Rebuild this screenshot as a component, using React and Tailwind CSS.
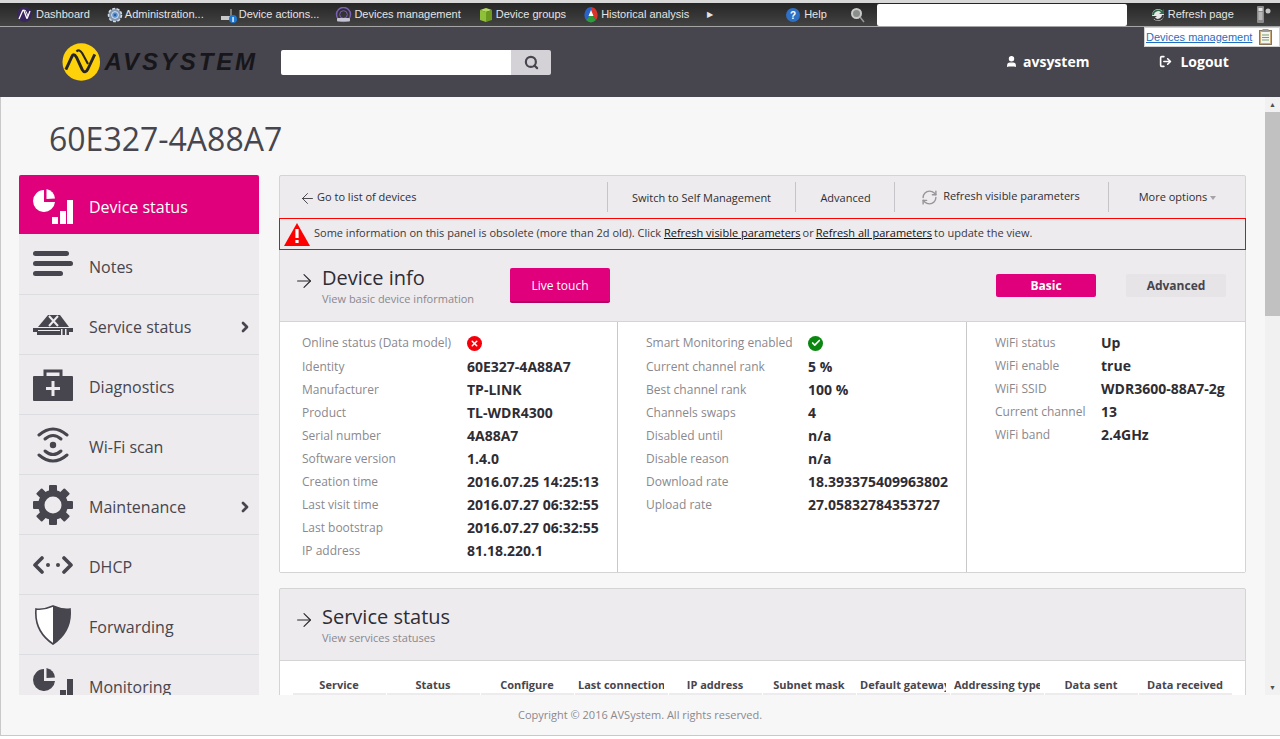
import React from 'react';
import { ArrowLeft, ArrowRight, ChevronRight, RefreshCw, Search, User, LogOut, X, Check } from 'lucide-react';

/* ── Small toolbar icons ─────────────────────────────────────────── */

const AvMark = () => (
  <svg width="15" height="15" viewBox="0 0 15 15">
    <circle cx="7.5" cy="7.5" r="7.5" fill="#3a2560" />
    <path d="M2 12 L5.5 4 Q6.5 2 7.5 5 L9.5 10.5 Q10 12 10.5 10.5 L13 4" fill="none" stroke="#fff" strokeWidth="1.3" />
    <path d="M7 3.5 Q8 2 9 4.5 L11 9" fill="none" stroke="#fff" strokeWidth="0.9" />
  </svg>
);

const AdminIcon = () => (
  <svg width="16" height="16" viewBox="0 0 16 16">
    <circle cx="8" cy="8" r="6.5" fill="#8296ad" stroke="#d5dde6" strokeDasharray="3 1.5" strokeWidth="1.5" />
    <circle cx="8" cy="8" r="3.4" fill="#5a90cf" stroke="#d8e2ee" />
    <circle cx="8" cy="8" r="1.2" fill="#2d5f9c" />
  </svg>
);

const DeviceActionsIcon = () => (
  <svg width="16" height="16" viewBox="0 0 16 16">
    <rect x="0" y="9" width="12" height="4" fill="#c8c8c8" />
    <path d="M10 9 V2" stroke="#c8c8c8" />
    <circle cx="12" cy="12" r="4" fill="#1f78d1" />
    <rect x="11.4" y="10" width="1.3" height="5" fill="#fff" />
  </svg>
);

const DevicesMgmtIcon = () => (
  <svg width="17" height="16" viewBox="0 0 17 16" fill="none">
    <circle cx="8.5" cy="7.5" r="7" stroke="#7a5fb5" strokeWidth="1.5" />
    <circle cx="8.5" cy="7.5" r="3.8" stroke="#7a5fb5" />
    <rect x="2" y="11" width="13" height="3.5" rx="1" fill="#c5c5d5" />
  </svg>
);

const CubeIcon = () => (
  <svg width="14" height="16" viewBox="0 0 14 16">
    <path d="M1 3 L7 1 L13 3 L7 5 Z" fill="#b5dc60" />
    <path d="M1 3 L7 5 V15 L1 13 Z" fill="#8fc03a" />
    <path d="M13 3 L7 5 V15 L13 13 Z" fill="#6c9a20" />
  </svg>
);

const HistoryIcon = () => (
  <svg width="14" height="16" viewBox="0 0 14 16">
    <path d="M7 0 A7 8 0 0 0 2 13 L7 7 Z" fill="#2a62c8" />
    <path d="M7 0 A7 8 0 0 1 12 13 L7 7 Z" fill="#d9342b" />
    <path d="M2 13 A7 8 0 0 0 12 13 L7 7 Z" fill="#2e9a3e" />
    <path d="M7 3 L9.5 9 H4.5 Z" fill="#fff" />
  </svg>
);

const HelpIcon = () => (
  <svg width="14" height="14" viewBox="0 0 14 14">
    <circle cx="7" cy="7" r="7" fill="#2f6fc4" />
    <text x="7" y="11" textAnchor="middle" fontSize="10" fontWeight="700" fill="#fff" fontFamily="Liberation Sans, sans-serif">?</text>
  </svg>
);

const MagnifierIcon = () => (
  <svg width="16" height="16" viewBox="0 0 16 16">
    <circle cx="6.5" cy="6.5" r="4.5" fill="#8b8f8b" stroke="#c9cbc9" strokeWidth="2" />
    <path d="M10 10 L14 15" stroke="#9a9a9a" strokeWidth="1.5" />
  </svg>
);

const RefreshPageIcon = () => (
  <svg width="14" height="14" viewBox="0 0 14 14">
    <circle cx="7" cy="7" r="6" fill="#e8e8e8" />
    <path d="M1 7 A6 6 0 0 1 11 3 L13 1 V6 H8 L10 4.5 A4 4 0 0 0 3 7 Z" fill="#2c6e49" />
    <path d="M13 7 A6 6 0 0 1 3 11 L1 13 V8 H6 L4 9.5 A4 4 0 0 0 11 7 Z" fill="#3c3c3c" />
  </svg>
);

const RemoteIcon = () => (
  <svg width="16" height="18" viewBox="0 0 16 18">
    <rect x="1" y="0" width="7" height="17" rx="1" fill="#8c8c8c" />
    <rect x="2.5" y="2" width="4" height="3" fill="#e2e2e2" />
    <path d="M2.5 7h4M2.5 9h4M2.5 11h4M2.5 13h4" stroke="#e2e2e2" />
    <circle cx="12" cy="5" r="2.5" fill="#c4c4c4" />
  </svg>
);

const ClipboardIcon = () => (
  <svg width="13" height="16" viewBox="0 0 13 16">
    <rect x="0.5" y="1.5" width="12" height="14" fill="#c9a977" stroke="#8a7656" />
    <rect x="2" y="3" width="9" height="11" fill="#f4f4f0" />
    <rect x="3.5" y="0" width="6" height="3" fill="#9a9a9a" />
    <path d="M3 6h7M3 8.5h7M3 11h7" stroke="#7a9a70" />
  </svg>
);

/* ── Logo ────────────────────────────────────────────────────────── */

const LogoMark = () => (
  <svg width="40" height="40" viewBox="0 0 40 40">
    <circle cx="20" cy="20" r="19.5" fill="#fdd20a" />
    <path d="M4 28 L10 15 Q12 10 15 15 L21 28 Q24 33 27 27 L34 12" fill="none" stroke="#26252a" strokeWidth="3" />
    <path d="M15 9 Q18 6 21 11 L27 22" fill="none" stroke="#26252a" strokeWidth="2.2" />
  </svg>
);

/* ── Sidebar icons ───────────────────────────────────────────────── */

const StatusIcon = ({ color }) => (
  <svg width="40" height="36" viewBox="0 0 40 36" fill={color}>
    <path d="M11 2 A11 11 0 1 0 22 14 H11 Z" />
    <path d="M13.5 1 A10.5 10.5 0 0 1 22 10.5 L13.5 11 Z" />
    <rect x="19" y="29" width="6" height="7" />
    <rect x="27" y="23" width="6" height="13" />
    <rect x="34" y="12" width="6" height="24" />
  </svg>
);

const NotesIcon = () => (
  <svg width="40" height="26" viewBox="0 0 40 26" fill="#47454d">
    <rect x="0" y="0" width="36" height="5" rx="2.5" />
    <rect x="0" y="10" width="40" height="5" rx="2.5" />
    <rect x="0" y="20" width="30" height="5" rx="2.5" />
  </svg>
);

const ServiceIcon = () => (
  <svg width="40" height="22" viewBox="0 0 40 22">
    <path d="M5 13 L15 1 H27 L36 13 Z" fill="#47454d" />
    <path d="M16 2 L25 12 M25 2 L16 12" stroke="#edebee" strokeWidth="2" />
    <path d="M0 14 H40 V18 H36 V21 H4 V18 H0 Z" fill="#47454d" />
    <path d="M5 16.5 H27" stroke="#edebee" />
    <rect x="28" y="15" width="1.5" height="6" fill="#edebee" />
    <rect x="32" y="15" width="1.5" height="6" fill="#edebee" />
  </svg>
);

const KitIcon = () => (
  <svg width="40" height="32" viewBox="0 0 40 32">
    <path d="M12 8 V2 H28 V8" fill="none" stroke="#47454d" strokeWidth="3" />
    <rect x="0" y="7" width="40" height="25" rx="1" fill="#47454d" />
    <path d="M20 12 V27 M13 19.5 H27" stroke="#edebee" strokeWidth="3" />
  </svg>
);

const WifiIcon = () => (
  <svg width="32" height="38" viewBox="0 0 32 38" fill="none" stroke="#47454d" strokeWidth="3" strokeLinecap="round">
    <path d="M2 9 Q16 -3 30 9" />
    <path d="M8 13 Q16 6 24 13" />
    <circle cx="16" cy="19" r="3.2" fill="#47454d" stroke="none" />
    <path d="M8 25 Q16 32 24 25" />
    <path d="M2 29 Q16 41 30 29" />
  </svg>
);

const GearIcon = () => (
  <svg width="40" height="40" viewBox="0 0 40 40">
    <g fill="#47454d">
      <rect x="16" y="0" width="8" height="40" rx="1" />
      <rect x="16" y="0" width="8" height="40" rx="1" transform="rotate(45 20 20)" />
      <rect x="16" y="0" width="8" height="40" rx="1" transform="rotate(90 20 20)" />
      <rect x="16" y="0" width="8" height="40" rx="1" transform="rotate(135 20 20)" />
      <circle cx="20" cy="20" r="15" />
    </g>
    <circle cx="20" cy="20" r="8.5" fill="#edebee" />
  </svg>
);

const DhcpIcon = () => (
  <svg width="40" height="18" viewBox="0 0 40 18" fill="none" stroke="#47454d" strokeWidth="3.6" strokeLinecap="round" strokeLinejoin="round">
    <path d="M9 2 L2 9 L9 16" />
    <path d="M31 2 L38 9 L31 16" />
    <circle cx="15" cy="9" r="2" fill="#47454d" stroke="none" />
    <circle cx="25" cy="9" r="2" fill="#47454d" stroke="none" />
  </svg>
);

const ShieldIcon = () => (
  <svg width="38" height="40" viewBox="0 0 38 40">
    <path d="M19 1 Q10 5 2 4 Q0 26 19 39 Q38 26 36 4 Q28 5 19 1 Z" fill="#fff" stroke="#47454d" strokeWidth="1.6" />
    <path d="M19 1 Q28 5 36 4 Q38 26 19 39 Z" fill="#47454d" />
  </svg>
);

/* ── Data ────────────────────────────────────────────────────────── */

const toolbarItems = [
  { label: 'Dashboard', icon: <AvMark />, cls: 'gap-[4px]' },
  { label: 'Administration...', icon: <AdminIcon />, cls: 'gap-[2px] ml-[1px]' },
  { label: 'Device actions...', icon: <DeviceActionsIcon />, cls: 'gap-[2px] ml-[1px]' },
  { label: 'Devices management', icon: <DevicesMgmtIcon />, cls: 'gap-[2px]' },
  { label: 'Device groups', icon: <CubeIcon />, cls: 'gap-[3px] ml-[2px]' },
  { label: 'Historical analysis', icon: <HistoryIcon />, cls: 'gap-[3px] ml-[2px]' },
];

const sideItems = [
  { label: 'Notes', icon: <NotesIcon />, height: 'h-[61px]', labelTop: 'mt-[6px]' },
  { label: 'Service status', icon: <ServiceIcon />, more: true, height: 'h-[60px]', labelTop: 'mt-[4px]' },
  { label: 'Diagnostics', icon: <KitIcon />, height: 'h-[60px]', labelTop: 'mt-[4px]' },
  { label: 'Wi-Fi scan', icon: <WifiIcon />, height: 'h-[60px]', labelTop: 'mt-[4px]' },
  { label: 'Maintenance', icon: <GearIcon />, more: true, height: 'h-[60px]', labelTop: 'mt-[4px]' },
  { label: 'DHCP', icon: <DhcpIcon />, height: 'h-[60px]', labelTop: 'mt-[4px]' },
  { label: 'Forwarding', icon: <ShieldIcon />, height: 'h-[60px]', labelTop: 'mt-[4px]' },
  { label: 'Monitoring', icon: <StatusIcon color="#47454d" />, height: 'h-[60px]', labelTop: 'mt-[4px]' },
];

const infoLeft = [
  ['Identity', '60E327-4A88A7'],
  ['Manufacturer', 'TP-LINK'],
  ['Product', 'TL-WDR4300'],
  ['Serial number', '4A88A7'],
  ['Software version', '1.4.0'],
  ['Creation time', '2016.07.25 14:25:13'],
  ['Last visit time', '2016.07.27 06:32:55'],
  ['Last bootstrap', '2016.07.27 06:32:55'],
  ['IP address', '81.18.220.1'],
];

const infoMiddle = [
  ['Current channel rank', '5 %'],
  ['Best channel rank', '100 %'],
  ['Channels swaps', '4'],
  ['Disabled until', 'n/a'],
  ['Disable reason', 'n/a'],
  ['Download rate', '18.393375409963802'],
  ['Upload rate', '27.05832784353727'],
];

const infoRight = [
  ['WiFi status', 'Up'],
  ['WiFi enable', 'true'],
  ['WiFi SSID', 'WDR3600-88A7-2g'],
  ['Current channel', '13'],
  ['WiFi band', '2.4GHz'],
];

const serviceCols = [
  'Service',
  'Status',
  'Configure',
  'Last connection',
  'IP address',
  'Subnet mask',
  'Default gateway',
  'Addressing type',
  'Data sent',
  'Data received',
];

/* ── Pieces ──────────────────────────────────────────────────────── */

const InfoRow = ({ label, labelWidth, height = 'h-[23px]', children }) => (
  <div className={`flex items-center ${height}`}>
    <span className={`${labelWidth} shrink-0 text-[12px] text-[#8a888e]`}>{label}</span>
    <span className="text-[14px] font-bold text-[#2f2d33] whitespace-nowrap">{children}</span>
  </div>
);

const StatusDot = ({ ok }) => (
  <span className={`flex w-[15px] h-[15px] rounded-full items-center justify-center ${ok ? 'bg-[#0a870f]' : 'bg-[#f5000a]'}`}>
    {ok ? <Check size={10} color="#fff" strokeWidth={4} /> : <X size={9} color="#fff" strokeWidth={4} />}
  </span>
);

const Divider = () => <span className="w-px h-[30px] bg-[#c6c4c8] shrink-0" />;

const SectionHead = ({ title, subtitle }) => (
  <div className="flex items-start">
    <ArrowRight size={22} strokeWidth={1.2} className="mt-[6px] ml-[13px] mr-[7px] text-[#26252a] shrink-0" />
    <div>
      <h2 className="text-[20px] leading-[27px] text-[#2f2d33]">{title}</h2>
      <p className="text-[11px] leading-[14px] mt-[1px] text-[#8a888e]">{subtitle}</p>
    </div>
  </div>
);

const App = () => (
  <div className="h-[739px] overflow-hidden flex flex-col bg-white font-['Open_Sans',sans-serif]">
    {/* Browser style toolbar */}
    <div className="pt-[3px] shrink-0 bg-[#d8d8d8]">
      <div className="h-[24px] flex items-center pl-[17px] border-b border-[#a5a5a5] bg-gradient-to-b from-[#262626] to-[#434343] font-['Liberation_Sans',sans-serif] text-[11px] text-[#e4e4e4] whitespace-nowrap">
        <div className="flex items-center gap-[16px]">
          {toolbarItems.map(({ label, icon, cls }) => (
            <span key={label} className={`flex items-center ${cls}`}>
              {icon}
              {label}
            </span>
          ))}
          <span className="text-[8px] ml-[2px]">&#9654;</span>
        </div>
        <span className="ml-[73px] flex items-center gap-[4px]"><HelpIcon />Help</span>
        <span className="ml-[23px]"><MagnifierIcon /></span>
        <div className="ml-[11px] w-[250px] h-[22px] bg-white rounded-[2px]" />
        <span className="ml-[24px] flex items-center gap-[3px]"><RefreshPageIcon />Refresh page</span>
        <span className="ml-[22px]"><RemoteIcon /></span>
      </div>
    </div>

    {/* Header */}
    <header className="relative h-[70px] shrink-0 flex items-center bg-[#47454d]">
      <div className="ml-[62px] w-[196px] flex items-center shrink-0">
        <LogoMark />
        <span className="ml-[4px] text-[24px] leading-none font-bold italic tracking-[2.9px] text-[#17161a] font-['Liberation_Sans',sans-serif]">AVSYSTEM</span>
      </div>
      <div className="ml-[23px] flex w-[270px] h-[25px] rounded-[2px] overflow-hidden shrink-0">
        <div className="w-[230px] bg-white" />
        <div className="flex-1 bg-[#d4d2d6] flex items-center justify-center">
          <Search size={15} strokeWidth={3.5} className="text-[#47454d]" />
        </div>
      </div>
      <div className="ml-[454px] mb-[1px] flex items-center gap-[5px] text-[14px] font-bold text-white">
        <User size={13} fill="#fff" strokeWidth={2} />
        avsystem
      </div>
      <div className="ml-[70px] mb-[1px] flex items-center gap-[8px] text-[14px] font-bold text-white">
        <LogOut size={13} strokeWidth={3} />
        Logout
      </div>
      {/* Breadcrumb tooltip */}
      <div className="absolute top-0 right-0 w-[136px] h-[20px] bg-white flex items-center pl-[1px] gap-[7px] font-['Liberation_Sans',sans-serif] text-[11px] text-[#1f6fc0] underline border border-[#d0d0d0]">
        Devices management
        <ClipboardIcon />
      </div>
    </header>

    {/* Scrolling content */}
    <div className="h-[598px] shrink-0 overflow-hidden flex bg-[#f7f7f7] border-l border-[#c9c9c9]">
      <div className="flex-1 min-w-0 overflow-hidden">
        <h1 className="ml-[48px] mt-[19px] h-[45px] text-[32px] leading-[45px] text-[#47454d]">60E327-4A88A7</h1>
        <div className="mt-[14px] ml-[18px] flex items-start">
          {/* Sidebar */}
          <nav className="w-[240px] shrink-0 bg-[#edebee]">
            <div className="h-[59px] flex items-center pl-[14px] bg-[#e0007b] rounded-t-[2px] text-white text-[16px]">
              <span className="w-[40px] mr-[16px] mt-[2px] flex justify-center"><StatusIcon color="#fff" /></span>
              <span className="mt-[4px]">Device status</span>
            </div>
            {sideItems.map(({ label, icon, more, height, labelTop }) => (
              <div key={label} className={`${height} flex items-center pl-[14px] pr-[6px] border-b border-[#dcdde0] text-[16px] text-[#47454d]`}>
                <span className="w-[40px] mr-[16px] flex justify-center">{icon}</span>
                <span className={`flex-1 ${labelTop}`}>{label}</span>
                {more && <ChevronRight size={16} strokeWidth={4} className="mt-[4px]" />}
              </div>
            ))}
          </nav>

          {/* Main column */}
          <div className="ml-[20px] w-[967px] shrink-0">
            <section className="bg-[#edebee] border border-[#d4d4d4] rounded-[2px]">
              <div className="h-[42px] flex items-center whitespace-nowrap text-[11px] text-[#2f2d33]">
                <span className="ml-[21px] w-[306px] flex items-center gap-[5px]">
                  <ArrowLeft size={17} strokeWidth={1.2} className="-ml-[2px] -mr-[4px] mt-[3px]" />
                  Go to list of devices
                </span>
                <Divider />
                <span className="w-[187px] text-center mt-[2px]">Switch to Self Management</span>
                <Divider />
                <span className="w-[98px] text-center pl-[1px] mt-[2px]">Advanced</span>
                <Divider />
                <span className="w-[213px] flex items-center justify-center gap-[5px] pr-[2px]">
                  <RefreshCw size={17} className="text-[#97959a] mt-[1px]" />
                  <span className="-mt-[2px]">Refresh visible parameters</span>
                </span>
                <Divider />
                <span className="flex-1 flex items-center justify-center gap-[3px] pl-[1px]">
                  More options
                  <span className="mt-[2px] w-0 h-0 border-x-[3px] border-x-transparent border-t-[4px] border-t-[#a5a3a8]" />
                </span>
              </div>
              <div className="-mx-px h-[32px] flex items-center border border-[#ff0000] text-[11px] text-[#3a383e] whitespace-nowrap">
                <svg width="26" height="23" viewBox="0 0 26 23" className="ml-[4px] mr-[4px] shrink-0">
                  <path d="M13 0 L26 23 H0 Z" fill="#ff0000" />
                  <rect x="11.4" y="6" width="3.2" height="9" fill="#fff" />
                  <rect x="11.4" y="17" width="3.2" height="3" fill="#fff" />
                </svg>
                <span className="-mt-[2px]">
                  Some information on this panel is obsolete (more than 2d old). Click{' '}
                  <span className="underline text-[#111]">Refresh visible parameters</span>
                  <span className="mx-[2px]">or</span>
                  <span className="underline text-[#111]">Refresh all parameters</span>
                  <span className="ml-[2px]">to update the view.</span>
                </span>
              </div>

              <div className="h-[71px] pt-[14px] relative">
                <SectionHead title="Device info" subtitle="View basic device information" />
                <button className="absolute left-[230px] top-[18px] w-[100px] h-[35px] pt-[2px] bg-[#e0007b] border-b-2 border-[#b00062] rounded-[2px] text-white text-[12px]">Live touch</button>
                <button className="absolute right-[149px] top-[24px] w-[100px] h-[23px] bg-[#e0007b] rounded-[2px] text-white text-[12px] font-bold">Basic</button>
                <button className="absolute right-[19px] top-[24px] w-[100px] h-[23px] bg-[#e6e4e7] rounded-[2px] text-[#47454d] text-[12px] font-bold">Advanced</button>
              </div>

              <div className="h-[251px] flex bg-white border-t border-[#d4d4d4]">
                <div className="w-[338px] shrink-0 pl-[22px] pt-[9px] border-r border-[#c9c9c9]">
                  <InfoRow label="Online status (Data model)" labelWidth="w-[165px]" height="h-[24px]"><StatusDot /></InfoRow>
                  {infoLeft.map(([k, v]) => <InfoRow key={k} label={k} labelWidth="w-[165px]">{v}</InfoRow>)}
                </div>
                <div className="w-[349px] shrink-0 pl-[28px] pt-[9px] border-r border-[#c9c9c9]">
                  <InfoRow label="Smart Monitoring enabled" labelWidth="w-[162px]" height="h-[24px]"><StatusDot ok /></InfoRow>
                  {infoMiddle.map(([k, v]) => <InfoRow key={k} label={k} labelWidth="w-[162px]">{v}</InfoRow>)}
                </div>
                <div className="flex-1 pl-[28px] pt-[9px]">
                  {infoRight.map(([k, v]) => <InfoRow key={k} label={k} labelWidth="w-[106px]">{v}</InfoRow>)}
                </div>
              </div>
            </section>

            <section className="mt-[15px] bg-[#edebee] border border-[#d4d4d4] rounded-[2px]">
              <div className="h-[71px] pt-[14px]">
                <SectionHead title="Service status" subtitle="View services statuses" />
              </div>
              <div className="bg-white border-t border-[#d4d4d4] pt-[16px] pb-[40px] px-[13px]">
                <div className="flex text-[11px] leading-[16px] font-bold text-[#47454d] whitespace-nowrap">
                  {serviceCols.map((label) => (
                    <span key={label} className="w-[94px] shrink-0 pl-[3px] pr-[5px]">
                      <span className="block overflow-hidden text-center">{label}</span>
                    </span>
                  ))}
                </div>
                <div className="flex gap-px">
                  {serviceCols.map((label) => (
                    <span key={label} className="flex-1 h-[20px] bg-[#edebee]" />
                  ))}
                </div>
              </div>
            </section>
          </div>
        </div>
      </div>

      {/* Scrollbar */}
      <div className="w-[15px] shrink-0 ml-[18px] bg-[#f1f1f1] flex flex-col items-center">
        <span className="h-[15px] text-[7px] leading-[15px] text-[#505050]">&#9650;</span>
        <div className="w-full h-[204px] bg-[#c1c1c1]" />
        <div className="flex-1" />
        <span className="h-[15px] text-[7px] leading-[15px] text-[#505050]">&#9660;</span>
      </div>
    </div>

    {/* Footer */}
    <footer className="h-[41px] shrink-0 flex items-center pl-[517px] bg-[#f7f7f7] border-l border-b border-[#c9c9c9] text-[11px] text-[#8a888e]">
      Copyright © 2016 AVSystem. All rights reserved.
    </footer>
  </div>
);

export default App;
